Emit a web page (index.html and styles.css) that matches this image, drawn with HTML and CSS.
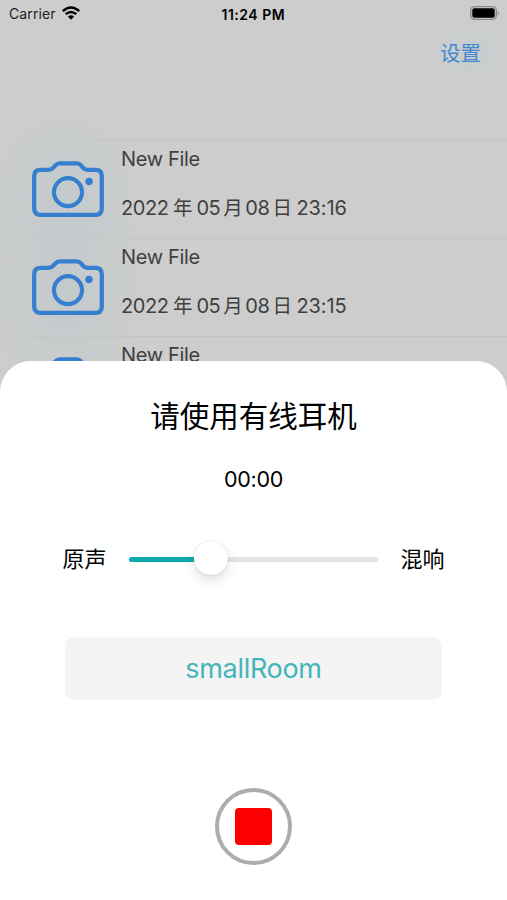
FILE: index.html
```
<!DOCTYPE html>
<html lang="zh-CN">
<head>
<meta charset="utf-8">
<title>录音</title>
<link rel="stylesheet" href="styles.css">
</head>
<body>
<svg width="0" height="0" class="defs">
  <symbol id="camera" viewBox="0 0 72 56">
    <path d="M8 8.800H16.500Q19.500 8.800 21.400 6.600L23.300 4.400Q25.200 2.400 28 2.400H44.500Q47.300 2.400 49 4.400L50.900 6.600Q52.700 8.800 55.500 8.800H63.500Q69.800 8.800 69.800 15V47.500Q69.800 53.800 63.500 53.800H8.500Q2.200 53.800 2.200 47.500V15Q2.200 8.800 8.500 8.800Z" fill="none" stroke="currentColor" stroke-width="4.300"/>
    <circle cx="36" cy="31.200" r="14" fill="none" stroke="currentColor" stroke-width="4.200"/>
    <circle cx="57" cy="20.500" r="3.700" fill="currentColor"/>
  </symbol>
</svg>
<div class="screen">
  <header class="status">
    <div class="carrier"><span>Carrier</span>
      <svg class="wifi" viewBox="0 0 18 14"><g fill="none" stroke="#000" stroke-width="2.400"><path d="M.8 5.100Q9-2.300 17.200 5.100"/><path d="M3.700 8.200Q9 3.600 14.300 8.200"/></g><path d="M5.900 10.600Q9 7.900 12.100 10.600L9 13.700Z"/></svg>
    </div>
    <div class="clock">11:24 PM</div>
    <svg class="battery" viewBox="0 0 30 14"><rect x=".7" y=".7" width="25.600" height="12.600" rx="3.700" fill="none" stroke="#898989" stroke-width="1.300"/><rect x="2.300" y="2.300" width="22.400" height="9.400" rx="2"/><path d="M27.700 4.700Q30 7 27.700 9.300Z" fill="#898989"/></svg>
  </header>
  <nav class="nav"><span>设置</span></nav>
  <ul class="files">
    <li><svg class="camera"><use href="#camera"/></svg><div class="info"><div class="name">New File</div><div class="date">2022<b>年</b>05<b>月</b>08<b>日</b><i>23:16</i></div></div></li>
    <li><svg class="camera"><use href="#camera"/></svg><div class="info"><div class="name">New File</div><div class="date">2022<b>年</b>05<b>月</b>08<b>日</b><i>23:15</i></div></div></li>
    <li><svg class="camera"><use href="#camera"/></svg><div class="info"><div class="name">New File</div></div></li>
  </ul>
  <section class="sheet">
    <h1>请使用有线耳机</h1>
    <div class="timer">00:00</div>
    <div class="mix">
      <span>原声</span>
      <div class="track"><div class="fill"></div><div class="knob"></div></div>
      <span>混响</span>
    </div>
    <div class="preset">smallRoom</div>
    <div class="record"><div class="stop"></div></div>
  </section>
</div>
</body>
</html>
```
FILE: styles.css
```
* { box-sizing: border-box; margin: 0; padding: 0; }
body { font-family: Inter, "Noto Sans CJK SC", sans-serif; color: #000; }
.defs { position: absolute; }
.screen {
  width: 507px; height: 900px; overflow: hidden;
  display: flex; flex-direction: column; position: relative;
  background:
    radial-gradient(ellipse 85px 150px at 64px 290px, #c3cacc 0%, rgba(204,204,204,0) 100%),
    radial-gradient(ellipse 85px 90px at 64px 190px, #c4cbcd 0%, rgba(204,204,204,0) 100%),
    radial-gradient(ellipse 65px 55px at 470px 52px, #c9cdcf 0%, rgba(204,204,204,0) 100%),
    #cdcdcd;
}
.status { display: grid; grid-template-columns: 1fr auto 1fr; height: 28px; padding: 0 7px 0 9px; align-items: center; flex: none; }
.carrier { display: flex; align-items: center; gap: 6px; font-size: 14px; line-height: 16px; letter-spacing: .1px; color: #222; }
.carrier span { margin-top: -1px; }
.wifi { width: 18px; height: 14px; margin-top: -2px; }
.clock { font-size: 14px; font-weight: 600; letter-spacing: .5px; margin-left: -2px; margin-right: -1px; width: 65px; white-space: nowrap; }
.battery { width: 30px; height: 14px; justify-self: end; margin-top: -2px; }
.nav { height: 112px; flex: none; display: flex; justify-content: flex-end; padding: 11px 26px 0 0; font-size: 20.500px; line-height: 30px; color: #4287d0; }
.files { list-style: none; height: 221px; overflow: hidden; flex: none; padding-left: 25px; }
.files li { display: flex; height: 98px; border-top: 1px solid #c4c5c5; padding: 0 0 0 7px; }
.camera { width: 72px; height: 56px; margin: 20px 17px 0 0; color: #357fce; flex: none; }
.info { color: #3f3f3f; font-size: 20px; line-height: 28px; white-space: nowrap; }
.name { margin-top: 4px; letter-spacing: -.35px; }
.date { margin-top: 21px; letter-spacing: -.45px; display: flex; }
.date b { font-weight: 400; font-size: 19.500px; width: 25px; text-align: center; }
.date b:first-of-type { width: 28px; }
.date i { font-style: normal; letter-spacing: -.1px; margin-left: 2px; }
.sheet { flex: 1; background: #fff; border-radius: 31px 31px 0 0; display: flex; flex-direction: column; align-items: center; }
h1 { font-size: 29.500px; line-height: 44px; font-weight: 400; margin-top: 33px; }
.timer { font-size: 21.500px; line-height: 30px; margin-top: 26px; letter-spacing: -.3px; }
.mix { margin-top: 45px; height: 40px; width: 382px; display: flex; align-items: center; gap: 22px; font-size: 22px; line-height: 32px; }
.mix span { margin-top: -1px; }
.track { flex: 1; height: 5px; border-radius: 3px; background: #e3e3e3; display: flex; align-items: center; }
.fill { width: 65px; height: 5px; border-radius: 3px 0 0 3px; background: #0caaae; }
.knob { width: 34px; height: 34px; flex: none; border-radius: 50%; background: #fff; margin-top: -3px; box-shadow: 0 6px 12px rgba(0,0,0,.12), 0 0 2px rgba(0,0,0,.15); }
.preset { margin-top: 58px; width: 377px; height: 63px; border-radius: 9px; background: #f4f4f4; color: #44b5b9; font-size: 27px; line-height: 64px; text-align: center; letter-spacing: -.3px; }
.record { margin-top: 88px; width: 77px; height: 77px; border: 4px solid #adadad; border-radius: 50%; display: grid; place-items: center; }
.stop { width: 37px; height: 37px; border-radius: 4px; background: #fe0000; }
```
